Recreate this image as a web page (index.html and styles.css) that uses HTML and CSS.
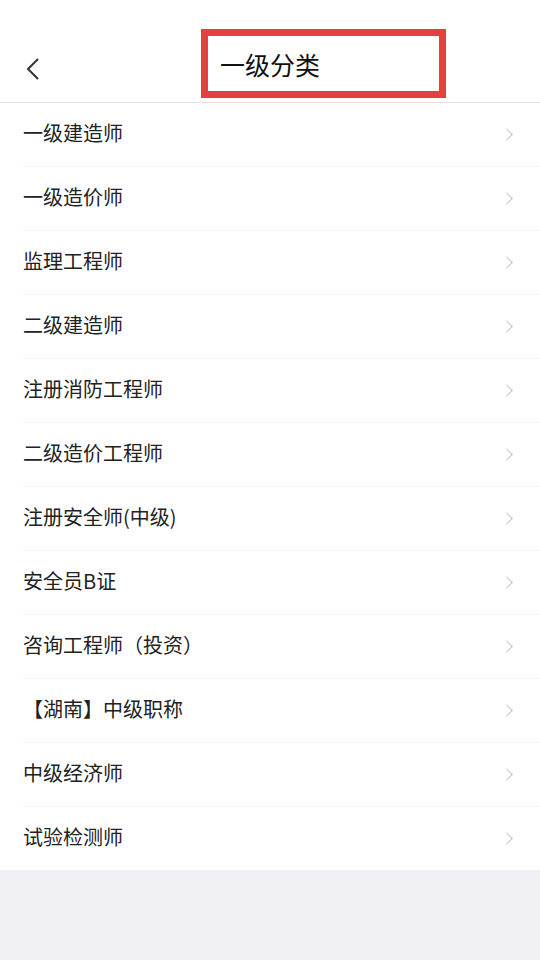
FILE: index.html
```html
<!DOCTYPE html>
<html lang="zh-CN">
<head>
<meta charset="utf-8">
<title>一级分类</title>
<link rel="stylesheet" href="styles.css">
</head>
<body>
<div class="page">
  <header class="navbar">
    <button class="back" aria-label="返回">
      <svg width="16" height="24" viewBox="0 0 16 24"><path d="M13 2 L3 12 L13 22" fill="none" stroke="#333" stroke-width="2"/></svg>
    </button>
    <div class="title-box"><h1 class="title">一级分类</h1></div>
  </header>
  <ul class="list">
    <li class="item"><span class="label">一级建造师</span><span class="arrow"></span></li>
    <li class="item"><span class="label">一级造价师</span><span class="arrow"></span></li>
    <li class="item"><span class="label">监理工程师</span><span class="arrow"></span></li>
    <li class="item"><span class="label">二级建造师</span><span class="arrow"></span></li>
    <li class="item"><span class="label">注册消防工程师</span><span class="arrow"></span></li>
    <li class="item"><span class="label">二级造价工程师</span><span class="arrow"></span></li>
    <li class="item"><span class="label">注册安全师(中级)</span><span class="arrow"></span></li>
    <li class="item"><span class="label">安全员B证</span><span class="arrow"></span></li>
    <li class="item"><span class="label">咨询工程师（投资）</span><span class="arrow"></span></li>
    <li class="item"><span class="label">【湖南】中级职称</span><span class="arrow"></span></li>
    <li class="item"><span class="label">中级经济师</span><span class="arrow"></span></li>
    <li class="item"><span class="label">试验检测师</span><span class="arrow"></span></li>
  </ul>
</div>
</body>
</html>
```

FILE: styles.css
```css
* { box-sizing: border-box; }
html, body {
  margin: 0;
  padding: 0;
  background: #efeff4;
  font-family: "Noto Sans CJK SC", "Noto Sans", sans-serif;
}
.page {
  width: 540px;
  min-height: 960px;
  background: #efeff4;
}
.navbar {
  position: relative;
  height: 103px;
  background: #fff;
  border-bottom: 1px solid #e2e2e2;
}
.back {
  position: absolute;
  left: 25px;
  top: 57px;
  width: 16px;
  height: 24px;
  padding: 0;
  border: 0;
  background: none;
  display: block;
}
.back svg { display: block; }
.title-box {
  position: absolute;
  left: 201px;
  top: 29px;
  width: 245px;
  height: 69px;
  border: 7px solid #e54040;
  display: flex;
  align-items: center;
  padding-left: 12px;
}
.title {
  margin: 0;
  font-size: 25px;
  font-weight: 400;
  color: #111;
  line-height: 1;
  padding-top: 2px;
}
.list {
  list-style: none;
  margin: 0;
  padding: 0 0 0 23px;
  background: #fff;
}
.item {
  height: 64px;
  display: flex;
  align-items: center;
  justify-content: space-between;
  border-bottom: 1px solid #f2f2f2;
  padding-right: 29px;
}
.item:last-child { border-bottom: 0; height: 63px; }
.label {
  font-size: 20px;
  color: #222;
  line-height: 1;
  margin-top: -3px;
}
.arrow {
  width: 9px;
  height: 9px;
  border-top: 1.5px solid #c4c4c4;
  border-right: 1.5px solid #c4c4c4;
  transform: rotate(45deg);
  margin-top: -1px;
}
```
